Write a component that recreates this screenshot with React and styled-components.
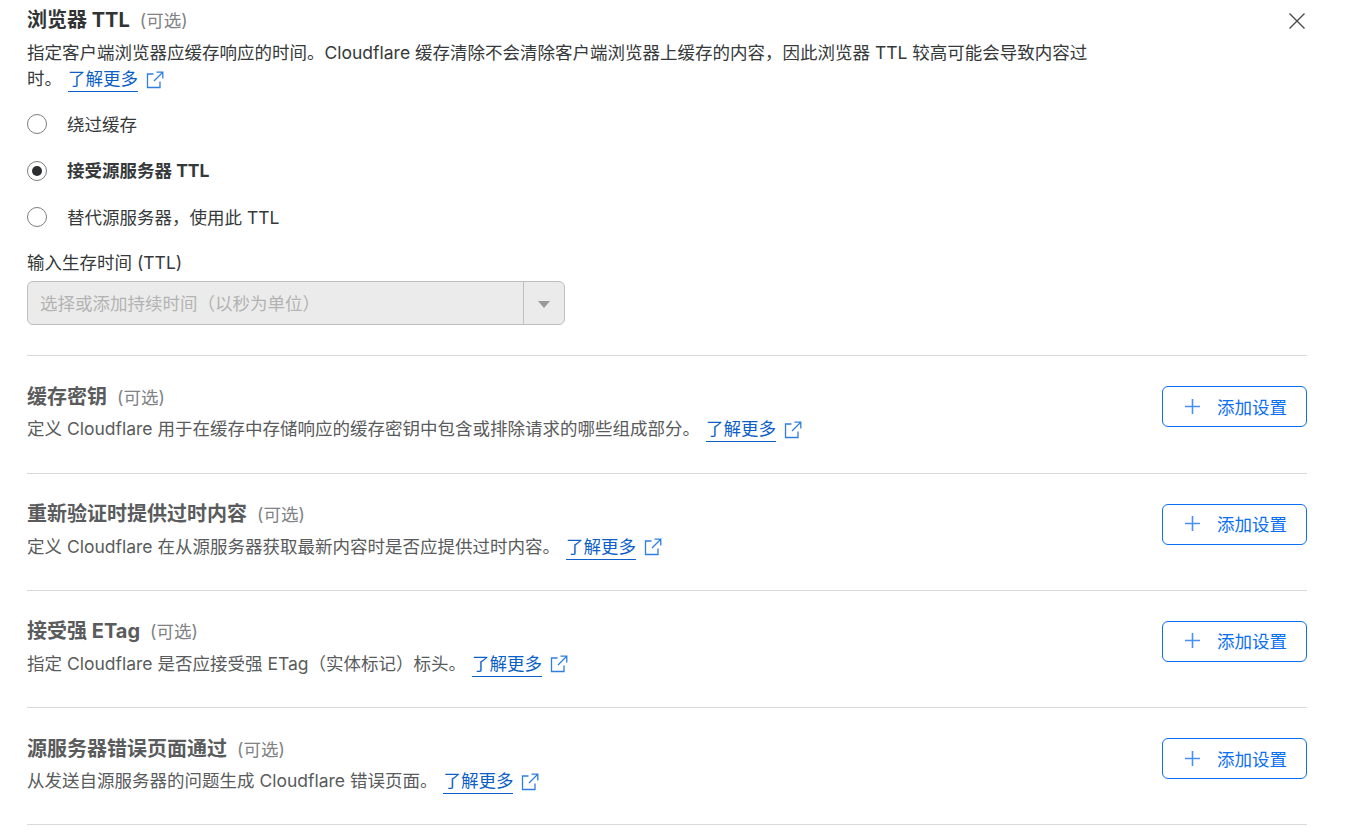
import React from "react";
import styled, { createGlobalStyle } from "styled-components";

const GlobalStyle = createGlobalStyle`
  html, body { margin: 0; padding: 0; background: #fff; }
  body {
    font-family: "Inter", "Noto Sans CJK SC", sans-serif;
    font-size: 17.5px;
    color: #36393a;
    overflow: hidden;
  }
`;

const Page = styled.div`
  position: relative;
  width: 1280px;
  height: 832px;
  padding: 7px 0 0 27px;
  overflow: hidden;
`;

const CloseButton = styled.button`
  position: absolute;
  top: 11px;
  right: 0;
  width: 20px;
  height: 20px;
  padding: 0;
  border: 0;
  background: none;
  color: #4a4a4a;
`;

const Title = styled.div`
  display: flex;
  align-items: baseline;
  gap: 10px;
  height: 27px;
  line-height: 27px;
  font-size: 20px;
  font-weight: 700;
  color: ${({ $muted }) => ($muted ? "#595b5c" : "#313435")};
`;

const Optional = styled.span`
  font-size: 17.5px;
  font-weight: 400;
  color: #808285;
`;

const Desc = styled.p`
  margin: ${({ $muted }) => ($muted ? "5.4px" : "6px")} 0 0;
  max-width: ${({ $wide }) => ($wide ? "1064px" : "none")};
  line-height: 26px;
  color: ${({ $muted }) => ($muted ? "#595b5c" : "#36393a")};
`;

const LearnLink = styled.a`
  display: inline-flex;
  align-items: center;
  gap: 8px;
  margin-left: 6px;
  color: #0b5fc7;
`;

const LinkText = styled.span`
  border-bottom: 1px solid #0b5fc7;
  line-height: 24px;
`;

const RadioGroup = styled.div`
  display: flex;
  flex-direction: column;
  gap: 18.6px;
  margin-top: 17px;
`;

const RadioRow = styled.label`
  display: flex;
  align-items: center;
  gap: 20px;
  height: 28px;
  font-weight: ${({ $checked }) => ($checked ? 700 : 400)};
  color: #36393a;
`;

const RadioDot = styled.span`
  display: flex;
  align-items: center;
  justify-content: center;
  box-sizing: border-box;
  width: 20px;
  height: 20px;
  margin-top: 2px;
  border: 1px solid #7b7d7f;
  border-radius: 50%;
  background: #fff;

  &::after {
    content: "";
    display: ${({ $checked }) => ($checked ? "block" : "none")};
    width: 10px;
    height: 10px;
    border-radius: 50%;
    background: #2c2e2f;
  }
`;

const FieldLabel = styled.div`
  margin-top: 19.8px;
  line-height: 26px;
  color: #36393a;
`;

const SelectBox = styled.div`
  display: flex;
  align-items: center;
  box-sizing: border-box;
  width: 538px;
  height: 44px;
  margin-top: 5px;
  border: 1px solid #bfbfbf;
  border-radius: 6px;
  background: #ebebeb;
`;

const Placeholder = styled.span`
  flex: 1;
  padding-left: 12px;
  color: #b3b3b3;
`;

const Caret = styled.span`
  display: flex;
  align-items: center;
  justify-content: center;
  width: 40px;
  height: 42px;
  border-left: 1px solid #bfbfbf;

  &::after {
    content: "";
    margin-top: 3px;
    border-left: 6px solid transparent;
    border-right: 6px solid transparent;
    border-top: 7px solid #999;
  }
`;

const Divider = styled.div`
  height: 1px;
  background: #d9d9d9;
  margin-top: ${({ $first }) => ($first ? "30.3px" : "0")};
`;

const SettingRow = styled.div`
  display: flex;
  align-items: flex-start;
  justify-content: space-between;
  box-sizing: border-box;
  height: 116.25px;
  padding-top: 27.6px;
`;

const AddButton = styled.button`
  display: flex;
  align-items: center;
  gap: 16px;
  box-sizing: border-box;
  width: 145px;
  height: 41px;
  margin-top: 2.4px;
  padding: 0 0 1px 21px;
  border: 1px solid #0a6ff2;
  border-radius: 6px;
  background: #fff;
  color: #0a6ff2;
  font: inherit;
`;

const ExternalIcon = () => (
  <svg width="18" height="18" viewBox="0 0 18 18" fill="none" stroke="#2f7fe0" strokeWidth="1.3">
    <path d="M7.5 3H1.5v13.5H14V10.5" />
    <path d="M8 10L16.5 1.5M10.5 1.2h6.3v6.3" />
  </svg>
);

const PlusIcon = () => (
  <svg width="17" height="17" viewBox="0 0 17 17" stroke="#4a90f0" strokeWidth="1.6">
    <path d="M8.5 1v15M1 8.5h15" />
  </svg>
);

const Learn = () => (
  <LearnLink>
    <LinkText>了解更多</LinkText>
    <ExternalIcon />
  </LearnLink>
);

const settings = [
  { title: "缓存密钥", desc: "定义 Cloudflare 用于在缓存中存储响应的缓存密钥中包含或排除请求的哪些组成部分。" },
  { title: "重新验证时提供过时内容", desc: "定义 Cloudflare 在从源服务器获取最新内容时是否应提供过时内容。" },
  { title: "接受强 ETag", desc: "指定 Cloudflare 是否应接受强 ETag（实体标记）标头。" },
  { title: "源服务器错误页面通过", desc: "从发送自源服务器的问题生成 Cloudflare 错误页面。" },
];

const radios = [
  { label: "绕过缓存" },
  { label: "接受源服务器 TTL", checked: true },
  { label: "替代源服务器，使用此 TTL" },
];

export default function App() {
  return (
    <Page>
      <GlobalStyle />
      <CloseButton aria-label="关闭">
        <svg width="20" height="20" viewBox="0 0 20 20" stroke="currentColor" strokeWidth="1.4">
          <path d="M2.5 2.5l15 15M17.5 2.5l-15 15" />
        </svg>
      </CloseButton>

      <Title>
        浏览器 TTL <Optional>(可选)</Optional>
      </Title>
      <Desc $wide>
        指定客户端浏览器应缓存响应的时间。Cloudflare 缓存清除不会清除客户端浏览器上缓存的内容，因此浏览器 TTL 较高可能会导致内容过时。
        <Learn />
      </Desc>

      <RadioGroup>
        {radios.map((r) => (
          <RadioRow key={r.label} $checked={r.checked}>
            <RadioDot $checked={r.checked} />
            {r.label}
          </RadioRow>
        ))}
      </RadioGroup>

      <FieldLabel>输入生存时间 (TTL)</FieldLabel>
      <SelectBox>
        <Placeholder>选择或添加持续时间（以秒为单位）</Placeholder>
        <Caret />
      </SelectBox>

      <Divider $first />
      {settings.map((s) => (
        <React.Fragment key={s.title}>
          <SettingRow>
            <div>
              <Title $muted>
                {s.title} <Optional>(可选)</Optional>
              </Title>
              <Desc $muted>
                {s.desc}
                <Learn />
              </Desc>
            </div>
            <AddButton>
              <PlusIcon />
              添加设置
            </AddButton>
          </SettingRow>
          <Divider />
        </React.Fragment>
      ))}
    </Page>
  );
}
